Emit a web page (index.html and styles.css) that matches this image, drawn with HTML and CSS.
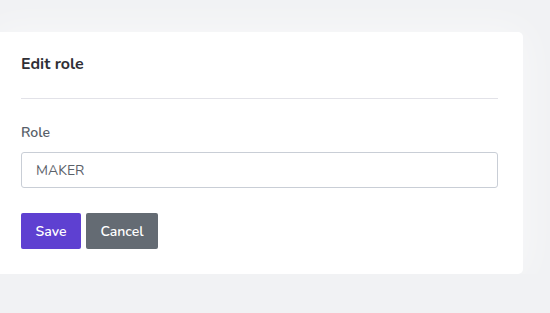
FILE: index.html
```html
<!DOCTYPE html>
<html lang="en">
<head>
  <meta charset="UTF-8">
  <meta name="viewport" content="width=device-width, initial-scale=1.0">
  <title>Edit role</title>
  <link rel="stylesheet" href="styles.css">
</head>
<body>

<div class="card">
  <h3>Edit role</h3>
  <form class="form" onsubmit="return false">
    <label class="label" for="role">Role</label>
    <input id="role" class="input" value="MAKER">
    <div class="actions">
      <button class="btn btn-primary" type="submit">Save</button>
      <button class="btn btn-secondary" type="button">Cancel</button>
    </div>
  </form>
</div>

</body>
</html>
```

FILE: styles.css
```css
body {
  font-family: 'Nunito', 'Lato', 'Noto Sans', sans-serif;
  background: #f1f2f4;
  margin: 0;
  padding: 32px 27px 0 0;
}
.card {
  margin-left: -6px;
  padding: 0 25px 25px 27px;
  background: #FFFFFF;
  border-radius: 5px;
  box-shadow: 0 0 40px rgba(255, 255, 255, 0.6);
}
h3 {
  font-size: 16px;
  font-weight: 700;
  color: #2f2f36;
  margin: 0;
  padding: 23px 0 24px;
  border-bottom: 1px solid #e2e2e8;
  line-height: 19px;
}
.form {
  padding-top: 25px;
}
.label {
  display: block;
  font-size: 14px;
  font-weight: 600;
  color: #575e68;
  line-height: 18px;
  margin-bottom: 10px;
}
.input {
  display: block;
  box-sizing: border-box;
  width: 100%;
  height: 36px;
  padding: 0 14px;
  border: 1px solid #c9ced6;
  border-radius: 3px;
  font-family: inherit;
  font-size: 14px;
  color: #5b6169;
  background: #FFFFFF;
}
.actions {
  display: flex;
  gap: 5px;
  margin-top: 25px;
}
.btn {
  height: 36px;
  padding: 0 10px;
  border: none;
  border-radius: 2px;
  font-family: inherit;
  font-size: 14px;
  font-weight: 600;
  color: #FFFFFF;
  cursor: pointer;
}
.btn-primary { background: #5e40d1; width: 60px; }
.btn-secondary { background: #646b73; width: 72px; }
```
